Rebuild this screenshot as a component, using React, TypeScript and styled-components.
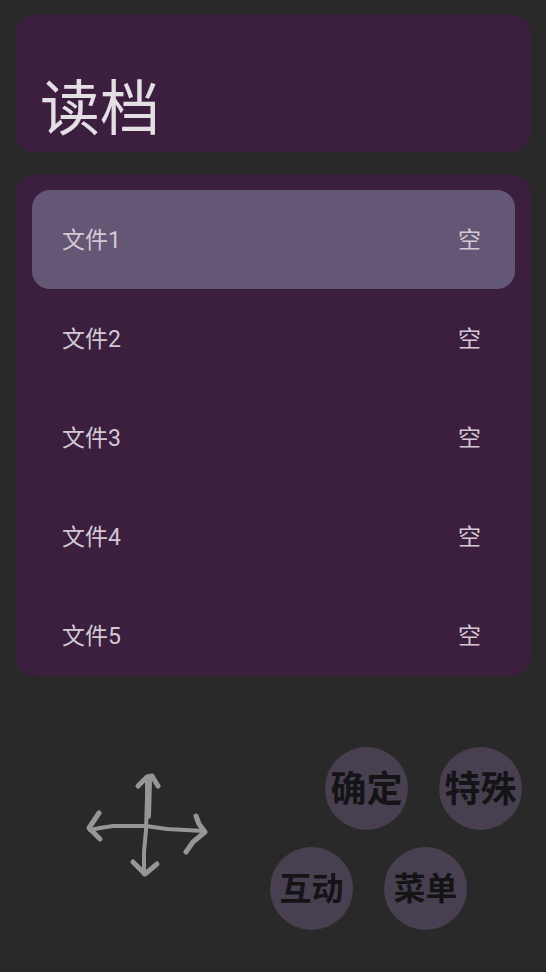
import React, { useState } from 'react';
import styled, { createGlobalStyle } from 'styled-components';

const GlobalStyle = createGlobalStyle`
  * { box-sizing: border-box; }
  body {
    margin: 0;
    background: #292929;
    font-family: Roboto, "Noto Sans CJK SC", sans-serif;
    -webkit-font-smoothing: antialiased;
  }
  button {
    border: 0;
    padding: 0;
    font: inherit;
    cursor: pointer;
  }
`;

const Screen = styled.main`
  display: flex;
  flex-direction: column;
  height: 100vh;
  padding: 15px 15px 0;
`;

const Panel = styled.section`
  background: #3c1e3e;
  border-radius: 20px;
`;

const Header = styled(Panel)`
  display: flex;
  align-items: flex-end;
  min-height: 137px;
  padding: 0 25px 12px;
`;

const Title = styled.h1`
  margin: 0;
  font-size: 60px;
  line-height: 60px;
  font-weight: 400;
  color: #e4dee5;
`;

const SlotPanel = styled(Panel)`
  flex: 1 1 0;
  min-height: 0;
  margin-top: 23px;
  padding: 15px 16px 0 17px;
  overflow: hidden;
`;

const SlotList = styled.ul`
  margin: 0;
  padding: 0;
  list-style: none;
`;

const Slot = styled.button<{ $selected: boolean }>`
  display: flex;
  align-items: center;
  justify-content: space-between;
  width: 100%;
  height: 99px;
  padding: 2px 34px 0 30px;
  border-radius: 18px;
  background: ${(p) => (p.$selected ? '#645675' : 'transparent')};
  color: #d2c9d4;
  font-size: 23px;
  line-height: 32px;
  text-align: left;
`;

const Controls = styled.footer`
  display: flex;
  flex-shrink: 0;
  align-items: flex-start;
  justify-content: space-between;
  height: 296px;
  padding: 71px 9px 0 67px;
`;

const Pad = styled.button`
  margin-top: 23px;
  background: none;
  color: #969696;

  svg { display: block; }
`;

const Actions = styled.div`
  display: flex;
  flex-direction: column;
  gap: 17px;
`;

const ActionRow = styled.div<{ $end?: boolean }>`
  display: flex;
  gap: 31px;
  padding-left: ${(p) => (p.$end ? '55px' : '0')};
`;

const Action = styled.button<{ $size: number }>`
  display: flex;
  align-items: center;
  justify-content: center;
  width: 83px;
  height: 83px;
  padding-bottom: 5px;
  border-radius: 50%;
  background: #483f50;
  color: #141316;
  font-family: "Noto Sans CJK SC", sans-serif;
  font-size: ${(p) => p.$size}px;
  line-height: 40px;
  font-weight: 700;
  white-space: nowrap;
`;

const slots = [1, 2, 3, 4, 5].map((n) => ({ id: n, name: `文件${n}`, state: '空' }));

function DirectionArrows() {
  return (
    <svg width="130" height="112" viewBox="0 0 130 112" fill="none" stroke="currentColor"
      strokeWidth="4" strokeLinecap="round" strokeLinejoin="round" aria-hidden="true">
      <path d="M8 60 L18 58 L31 56 L64 56 L85 59 L122 61" />
      <path d="M65 10 L65 28 L64 60 L62 82 L62 104" />
      <path d="M67 10 L66 46" strokeWidth="6" />
      <path d="M56 16 L65 7 L70 6 L76 16" strokeWidth="5" />
      <path d="M17 43 L7 58 L18 69" strokeWidth="5" />
      <path d="M51 92 L63 104 L75 94" strokeWidth="5" />
      <path d="M114 46 L117 54 L123 62 L111 72 L104 82" strokeWidth="5" />
    </svg>
  );
}

export default function App() {
  const [selected, setSelected] = useState(1);

  return (
    <>
      <GlobalStyle />
      <Screen lang="zh-CN">
        <Header>
          <Title>读档</Title>
        </Header>
        <SlotPanel>
          <SlotList>
            {slots.map((slot) => (
              <li key={slot.id}>
                <Slot
                  type="button"
                  $selected={slot.id === selected}
                  onClick={() => setSelected(slot.id)}
                >
                  <span>{slot.name}</span>
                  <span>{slot.state}</span>
                </Slot>
              </li>
            ))}
          </SlotList>
        </SlotPanel>
        <Controls>
          <Pad type="button" aria-label="方向键">
            <DirectionArrows />
          </Pad>
          <Actions>
            <ActionRow $end>
              <Action type="button" $size={36}>确定</Action>
              <Action type="button" $size={36}>特殊</Action>
            </ActionRow>
            <ActionRow>
              <Action type="button" $size={32}>互动</Action>
              <Action type="button" $size={32}>菜单</Action>
            </ActionRow>
          </Actions>
        </Controls>
      </Screen>
    </>
  );
}
